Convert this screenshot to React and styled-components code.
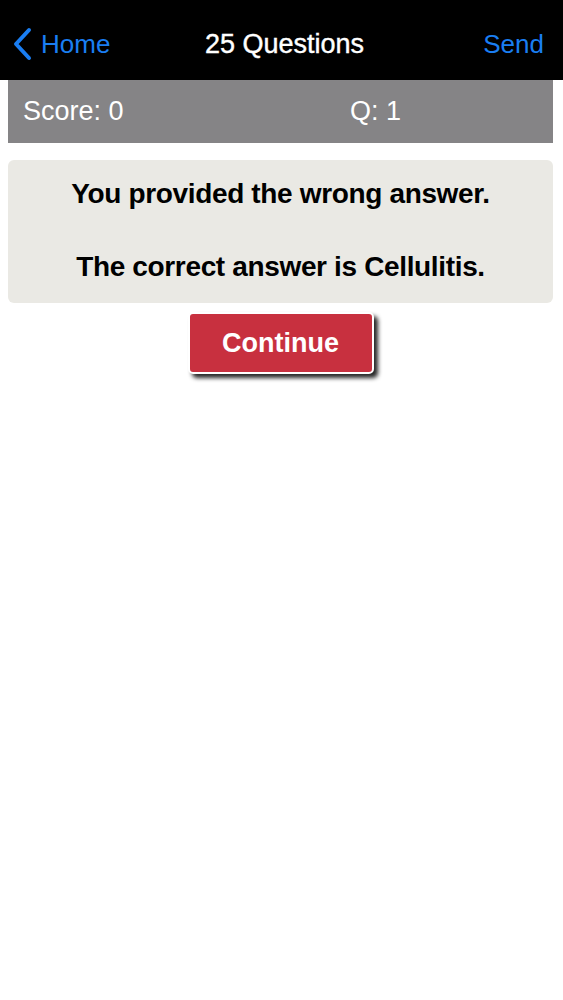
import React from "react";
import styled, { createGlobalStyle } from "styled-components";

const Global = createGlobalStyle`
  html, body { margin: 0; padding: 0; background: #ffffff; }
  body { font-family: "Liberation Sans", Arial, sans-serif; }
`;

const Page = styled.div`
  width: 563px;
  min-height: 1000px;
  background: #fff;
`;

const NavBar = styled.header`
  height: 80px;
  background: #000;
  display: grid;
  grid-template-columns: 1fr auto 1fr;
  align-items: center;
  padding: 0 12px;
  box-sizing: border-box;
`;

const NavButton = styled.button`
  background: none;
  border: none;
  padding: 0;
  display: flex;
  align-items: center;
  gap: 9px;
  color: #1a7ef2;
  font-family: "Liberation Sans", Arial, sans-serif;
  font-size: 26px;
  justify-self: ${(p) => (p.$right ? "end" : "start")};
  margin: 8px ${(p) => (p.$right ? "7px" : "0")} 0 0;
`;

const Title = styled.h1`
  margin: 8px 0 0 6px;
  color: #fff;
  font-size: 27px;
  font-weight: 400;
  font-family: "Liberation Sans", Arial, sans-serif;
  -webkit-text-stroke: 0.4px #fff;
`;

const Content = styled.main`
  padding: 0 10px 0 8px;
  display: flex;
  flex-direction: column;
`;

const ScoreBar = styled.div`
  height: 63px;
  background: #858486;
  display: grid;
  grid-template-columns: 327px 1fr;
  align-items: center;
  padding-left: 15px;
  color: #fff;
  font-size: 27px;
  font-family: "Liberation Sans", Arial, sans-serif;
`;

const Card = styled.section`
  margin-top: 17px;
  background: #eae9e4;
  border-radius: 6px;
  padding: 15px 0 18px;
  text-align: center;
  display: flex;
  flex-direction: column;
  gap: 36px;
`;

const Message = styled.p`
  margin: 0;
  color: #000;
  font-size: 28px;
  font-weight: 700;
  line-height: 37px;
  letter-spacing: -0.35px;
`;

const ButtonRow = styled.div`
  display: flex;
  justify-content: center;
  padding: 9px 0 0 0;
`;

const ContinueButton = styled.button`
  width: 186px;
  height: 62px;
  background: #c8303f;
  border: 2px solid #fff;
  border-radius: 5px;
  color: #fff;
  font-family: "Liberation Sans", Arial, sans-serif;
  font-size: 27px;
  font-weight: 700;
  box-shadow: 4px 4px 4px rgba(0, 0, 0, 0.85);
`;

function Chevron() {
  return (
    <svg width="20" height="34" viewBox="0 0 20 34">
      <path d="M17 3 L4 17 L17 31" fill="none" stroke="#1a7ef2" strokeWidth="4" strokeLinecap="round" strokeLinejoin="round" />
    </svg>
  );
}

export default function App() {
  return (
    <Page>
      <Global />
      <NavBar>
        <NavButton>
          <Chevron />
          Home
        </NavButton>
        <Title>25 Questions</Title>
        <NavButton $right>Send</NavButton>
      </NavBar>
      <Content>
        <ScoreBar>
          <span>Score: 0</span>
          <span>Q: 1</span>
        </ScoreBar>
        <Card>
          <Message>You provided the wrong answer.</Message>
          <Message>The correct answer is Cellulitis.</Message>
        </Card>
        <ButtonRow>
          <ContinueButton>Continue</ContinueButton>
        </ButtonRow>
      </Content>
    </Page>
  );
}
